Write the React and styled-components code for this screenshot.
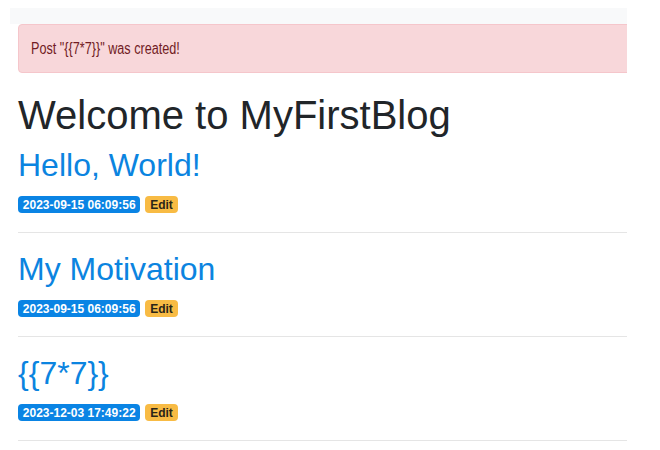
import React from "react";
import styled, { createGlobalStyle } from "styled-components";

const GlobalStyle = createGlobalStyle`
  html, body {
    margin: 0;
    padding: 0;
    background: #ffffff;
  }
  body {
    font-family: "Liberation Sans", Arial, Helvetica, sans-serif;
    font-size: 16px;
    line-height: 1.5;
    color: #212529;
  }
  * { box-sizing: border-box; }
`;

const Viewport = styled.div`
  margin: 8px 0 0 10px;
  width: 617px;
  overflow: hidden;
`;

const Navbar = styled.nav`
  height: 16px;
  background: #f8f9fa;
`;

const Container = styled.main`
  width: 700px;
  padding-left: 8px;
`;

const Alert = styled.div`
  height: 49px;
  padding: 12px;
  margin-bottom: 18px;
  border: 1px solid #f5c6cb;
  border-radius: 4px;
  background: #f8d7da;
  color: #721c24;
  font-size: 16px;
  line-height: 24px;
`;

const AlertText = styled.span`
  display: inline-block;
  transform: scaleX(0.79);
  transform-origin: left center;
  white-space: nowrap;
`;

const Title = styled.h1`
  margin: 0 0 7px;
  font-size: 40px;
  line-height: 48px;
  font-weight: 400;
  color: #212529;
`;

const Post = styled.article`
  display: flex;
  flex-direction: column;
`;

const PostTitle = styled.h2`
  margin: 0 0 12px;
  font-size: 32px;
  line-height: 38px;
  font-weight: 400;
`;

const PostLink = styled.a`
  color: #0b84e0;
  text-decoration: none;
`;

const Meta = styled.div`
  display: flex;
  align-items: flex-start;
  gap: 5px;
`;

const Badge = styled.span`
  display: inline-block;
  padding: 3px 4.8px 2px;
  font-size: 12px;
  line-height: 12px;
  font-weight: 700;
  border-radius: 4px;
  white-space: nowrap;
  background: ${(p) => (p.$variant === "warning" ? "#f8bb44" : "#0a84e4")};
  color: ${(p) => (p.$variant === "warning" ? "#2a2418" : "#ffffff")};
`;

const Divider = styled.hr`
  margin: 19px 0 17px;
  border: 0;
  border-top: 1px solid rgba(0, 0, 0, 0.1);
  height: 0;
`;

const posts = [
  { title: "Hello, World!", date: "2023-09-15 06:09:56" },
  { title: "My Motivation", date: "2023-09-15 06:09:56" },
  { title: "{{7*7}}", date: "2023-12-03 17:49:22" },
];

export default function App() {
  return (
    <>
      <GlobalStyle />
      <Viewport>
        <Navbar />
        <Container>
          <Alert>
            <AlertText>Post "{"{{7*7}}"}" was created!</AlertText>
          </Alert>
          <Title>Welcome to MyFirstBlog</Title>
          {posts.map((p, i) => (
            <Post key={i}>
              <PostTitle>
                <PostLink href="#">{p.title}</PostLink>
              </PostTitle>
              <Meta>
                <Badge>{p.date}</Badge>
                <Badge $variant="warning">Edit</Badge>
              </Meta>
              <Divider />
            </Post>
          ))}
        </Container>
      </Viewport>
    </>
  );
}
